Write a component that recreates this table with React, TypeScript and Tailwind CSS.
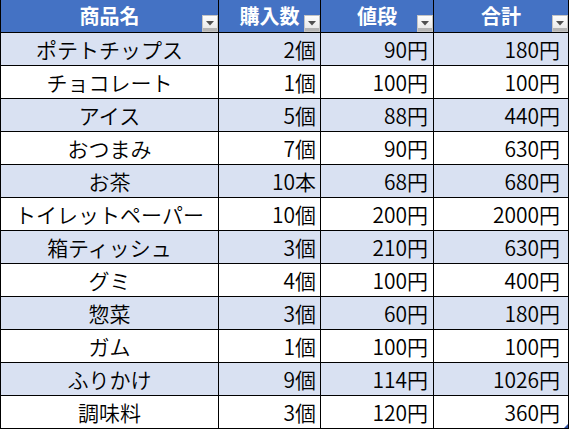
const rows = [
  ["ポテトチップス", "2個", "90円", "180円"],
  ["チョコレート", "1個", "100円", "100円"],
  ["アイス", "5個", "88円", "440円"],
  ["おつまみ", "7個", "90円", "630円"],
  ["お茶", "10本", "68円", "680円"],
  ["トイレットペーパー", "10個", "200円", "2000円"],
  ["箱ティッシュ", "3個", "210円", "630円"],
  ["グミ", "4個", "100円", "400円"],
  ["惣菜", "3個", "60円", "180円"],
  ["ガム", "1個", "100円", "100円"],
  ["ふりかけ", "9個", "114円", "1026円"],
  ["調味料", "3個", "120円", "360円"],
];

const headers = ["商品名", "購入数", "値段", "合計"];

function FilterButton() {
  return (
    <div className="absolute right-0 bottom-0 w-[16px] h-[17px] border border-[#c4c4c4] bg-gradient-to-b from-[#fdfdfd] to-[#e6e6e6] flex justify-center pt-[5px]">
      <svg width="8" height="5" viewBox="0 0 8 5">
        <polygon points="0,0 8,0 4,4.5" fill="#505050" />
      </svg>
      <div className="absolute left-0 right-0 bottom-0 h-[3px] bg-[#b4b4b4]" />
    </div>
  );
}

export default function App() {
  return (
    <div className="bg-white w-[570px] h-[431px] font-['Noto_Sans_CJK_JP',sans-serif] text-black">
      <div className="relative w-[569px] border-l border-black grid grid-cols-[218px_102px_113px_135px]">
        {headers.map((h) => (
          <div
            key={h}
            className="relative h-[33px] bg-[#4472c4] border-r border-b border-black flex items-center justify-center text-white font-bold text-[20px] leading-none pb-[1px]"
          >
            {h}
            <FilterButton />
          </div>
        ))}
        {rows.map((r, i) => {
          const bg = i % 2 === 0 ? "bg-[#d9e1f2]" : "bg-white";
          return (
            <div key={r[0]} className="contents">
              <div className={`${bg} h-[33px] border-r border-b border-black flex items-center justify-center text-[21px] font-[350] leading-none`}>
                {r[0]}
              </div>
              <div className={`${bg} h-[33px] border-r border-b border-black flex items-center justify-end pr-[4px] text-[21px] font-[350] leading-none`}>
                {r[1]}
              </div>
              <div className={`${bg} h-[33px] border-r border-b border-black flex items-center justify-end pr-[5px] text-[21px] font-[350] leading-none`}>
                {r[2]}
              </div>
              <div className={`${bg} h-[33px] border-r border-b border-black flex items-center justify-end pr-[8px] text-[21px] font-[350] leading-none`}>
                {r[3]}
              </div>
            </div>
          );
        })}
        <svg className="absolute right-[1px] bottom-[1px]" width="4" height="4" viewBox="0 0 4 4">
          <polygon points="4,0 4,4 0,4" fill="#2f4f9f" />
        </svg>
      </div>
    </div>
  );
}
